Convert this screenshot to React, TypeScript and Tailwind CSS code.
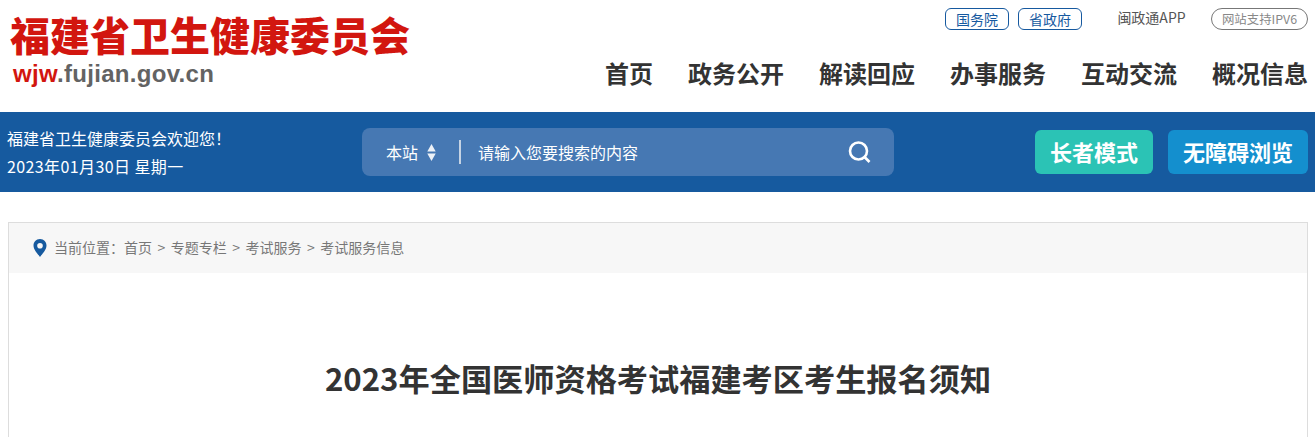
import React from "react";

const cjk = "font-['Noto_Sans_CJK_SC','Noto_Sans',sans-serif]";
const nav = ["首页", "政务公开", "解读回应", "办事服务", "互动交流", "概况信息"];

export default function App() {
  return (
    <div className={`w-[1315px] h-[437px] overflow-hidden bg-white ${cjk}`}>
      <header className="h-[112px] flex justify-between">
        <div className="pl-[10px] pt-[14px]">
          <div className="text-[40px] leading-[40px] font-black text-[#d2160f] whitespace-nowrap w-[400px]">福建省卫生健康委员会</div>
          <div className="mt-[6px] pl-[3px] text-[24px] leading-[28px] font-bold tracking-[0.3px] font-['Liberation_Sans',sans-serif] text-[#636363]">
            <span className="text-[#d2160f]">wjw</span>.fujian.gov.cn
          </div>
        </div>
        <div className="w-[720px] pr-[7px] flex flex-col items-end">
          <div className="h-[49px] pt-[8px] flex items-start text-[14px]">
            <span className="w-[64px] h-[22px] mr-[9px] flex items-center justify-center rounded-[6px] border border-[#16599f] text-[#16599f]">国务院</span>
            <span className="w-[64px] h-[22px] flex items-center justify-center rounded-[6px] border border-[#16599f] text-[#16599f]">省政府</span>
            <span className="w-[129px] h-[18px] pl-[10px] flex items-center justify-center text-[#555555]">闽政通APP</span>
            <span className="w-[97px] h-[22px] flex items-center justify-center rounded-full border border-[#777777] text-[#888888] text-[12.4px]">网站支持IPV6</span>
          </div>
          <nav className="flex gap-[35px] pt-[6px] text-[24px] leading-[36px] font-bold text-[#333333]">
            {nav.map((n) => (
              <span key={n} className="whitespace-nowrap">{n}</span>
            ))}
          </nav>
        </div>
      </header>

      <div className="h-[80px] bg-[#165a9f] flex items-center text-white">
        <div className="w-[362px] pl-[7px] text-[16px] leading-[28px]">
          <div className="whitespace-nowrap">福建省卫生健康委员会欢迎您！</div>
          <div className="whitespace-nowrap tracking-[0.4px]">2023年01月30日 星期一</div>
        </div>
        <div className="w-[532px] h-[48px] rounded-[8px] bg-[#4678b3] flex items-center text-[16px]">
          <span className="ml-[24px] w-[32px] whitespace-nowrap pb-[1px]">本站</span>
          <svg className="ml-[8px]" width="11" height="19" viewBox="0 0 10 18" fill="#fff" opacity="0.9">
            <path d="M5 1 L9 8 L1 8 Z" />
            <path d="M1 10 L9 10 L5 17 Z" />
          </svg>
          <span className="ml-[22px] w-[2px] h-[24px] bg-[#c5d3e4]" />
          <span className="ml-[17px] whitespace-nowrap pb-[1px]">请输入您要搜索的内容</span>
          <svg className="ml-auto mr-[23px]" width="23" height="22" viewBox="0 0 22 22" fill="none" stroke="#fff" strokeWidth="2.6">
            <circle cx="10" cy="10" r="8.5" />
            <path d="M16 16 L21 21" />
          </svg>
        </div>
        <div className="ml-auto mr-[7px] flex gap-[15px] text-[22px] font-bold">
          <span className="w-[118px] h-[44px] pb-[2px] rounded-[6px] bg-[#2bc3b5] flex items-center justify-center">长者模式</span>
          <span className="w-[140px] h-[44px] pb-[2px] rounded-[6px] bg-[#148fce] flex items-center justify-center">无障碍浏览</span>
        </div>
      </div>

      <main className="ml-[8px] mr-[7px] mt-[30px] h-[300px] border border-[#dddddd]">
        <div className="h-[50px] bg-[#f7f7f7] flex items-center pl-[24px] text-[14px] text-[#777777] whitespace-nowrap">
          <svg width="14" height="18" viewBox="0 0 14 18" className="mr-[7px]">
            <path fillRule="evenodd" fill="#165a9f" d="M7 0 C3 0 0.5 3 0.5 6.5 C0.5 11 5 15 7 18 C9 15 13.5 11 13.5 6.5 C13.5 3 11 0 7 0 Z M7 4 A2.8 2.8 0 1 1 7 9.6 A2.8 2.8 0 1 1 7 4 Z" />
          </svg>
          <span className="pb-[2px]">当前位置：</span>
          <span className="pb-[2px]">首页</span>
          <span className="mx-[5.5px] pb-[2px]">&gt;</span>
          <span className="pb-[2px]">专题专栏</span>
          <span className="mx-[5.5px] pb-[2px]">&gt;</span>
          <span className="pb-[2px]">考试服务</span>
          <span className="mx-[5.5px] pb-[2px]">&gt;</span>
          <span className="pb-[2px]">考试服务信息</span>
        </div>
        <h1 className="mt-[81px] text-center text-[31.2px] leading-[48px] font-bold text-[#333333]">2023年全国医师资格考试福建考区考生报名须知</h1>
      </main>
    </div>
  );
}
